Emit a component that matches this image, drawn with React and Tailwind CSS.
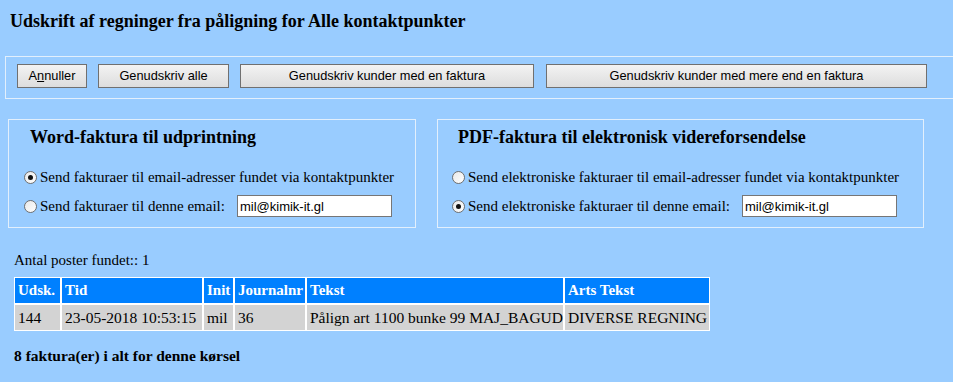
import React from "react";

const serif = { fontFamily: '"Liberation Serif", "Times New Roman", serif' };

const Button = ({ width, children }) => (
  <button
    type="button"
    className={`h-[24px] ${width} border border-[#707070] bg-gradient-to-b from-[#f3f3f3] to-[#dddddd] text-[12.8px] leading-none text-black`}
    style={{ fontFamily: '"Liberation Sans", Arial, sans-serif' }}
  >
    {children}
  </button>
);

const Radio = ({ checked }) => (
  <span className="flex h-[13px] w-[13px] shrink-0 items-center justify-center rounded-full border border-[#6f6f6f] bg-gradient-to-br from-[#e8e8e8] to-white">
    {checked && <span className="h-[5px] w-[5px] rounded-full bg-[#111]" />}
  </span>
);

const Option = ({ checked, label, email }) => (
  <div className="flex h-[24px] items-center">
    <Radio checked={checked} />
    <span className="ml-[3px] text-[15px] leading-[18px] whitespace-nowrap">{label}</span>
    {email && (
      <input
        readOnly
        value={email}
        className="ml-[12px] h-[22px] w-[155px] border border-[#767676] bg-white px-[2px] text-[13px] text-black outline-none"
        style={{ fontFamily: '"Liberation Sans", Arial, sans-serif' }}
      />
    )}
  </div>
);

const Box = ({ width, title, headPad, optPad, options }) => (
  <div className={`${width} h-[109px] border border-[#e2effc] pt-[6px]`}>
    <h3 className={`${headPad} text-[18px] font-bold leading-[22px]`}>{title}</h3>
    <div className={`${optPad} mt-[17px] flex flex-col gap-[5px]`}>
      {options.map((o, i) => (
        <Option key={i} {...o} />
      ))}
    </div>
  </div>
);

const columns = [
  { name: "Udsk.", w: "w-[47px]" },
  { name: "Tid", w: "w-[142px]" },
  { name: "Init", w: "w-[31px]" },
  { name: "Journalnr", w: "w-[72px]" },
  { name: "Tekst", w: "w-[258px]" },
  { name: "Arts Tekst", w: "w-[146px]" },
];

const rows = [["144", "23-05-2018 10:53:15", "mil", "36", "Pålign art 1100 bunke 99 MAJ_BAGUD", "DIVERSE REGNING"]];

export default function App() {
  return (
    <div className="h-[382px] w-[953px] overflow-hidden bg-[#99ccff] pt-[10px] text-black" style={serif}>
      <h2 className="pl-[10px] text-[18px] font-bold leading-[22px]">
        Udskrift af regninger fra påligning for Alle kontaktpunkter
      </h2>

      <div className="ml-[5px] mt-[24px] flex w-[960px] gap-[11px] border border-[#e2effc] pl-[11px] pt-[7px] pb-[10px]">
        <Button width="w-[70px]">
          A<span className="underline">n</span>nuller
        </Button>
        <Button width="w-[131px]">Genudskriv alle</Button>
        <Button width="w-[294px]">Genudskriv kunder med en faktura</Button>
        <Button width="w-[381px] ml-[1px]">Genudskriv kunder med mere end en faktura</Button>
      </div>

      <div className="ml-[8px] mt-[20px] flex gap-[21px]">
        <Box
          width="w-[408px]"
          title="Word-faktura til udprintning"
          headPad="pl-[21px]"
          optPad="pl-[15px]"
          options={[
            { checked: true, label: "Send fakturaer til email-adresser fundet via kontaktpunkter" },
            { checked: false, label: "Send fakturaer til denne email:", email: "mil@kimik-it.gl" },
          ]}
        />
        <Box
          width="w-[487px]"
          title="PDF-faktura til elektronisk videreforsendelse"
          headPad="pl-[20px]"
          optPad="pl-[14px]"
          options={[
            { checked: false, label: "Send elektroniske fakturaer til email-adresser fundet via kontaktpunkter" },
            { checked: true, label: "Send elektroniske fakturaer til denne email:", email: "mil@kimik-it.gl" },
          ]}
        />
      </div>

      <p className="ml-[14px] mt-[23px] text-[15px] leading-[18px]">Antal poster fundet:: 1</p>

      <table className="ml-[14px] mt-[8px] w-[696px] table-fixed border-separate border-spacing-0 text-[15.5px] leading-[25px]">
        <thead>
          <tr className="bg-[#0080ff] text-white">
            {columns.map((c) => (
              <th key={c.name} className={`${c.w} border border-white px-[3px] py-0 text-left text-[15px] font-bold whitespace-nowrap`}>
                {c.name}
              </th>
            ))}
          </tr>
        </thead>
        <tbody>
          {rows.map((r, i) => (
            <tr key={i} className="bg-[#d3d3d3]">
              {r.map((v, j) => (
                <td key={j} className="overflow-hidden border border-white px-[3px] py-0 whitespace-nowrap">
                  {v}
                </td>
              ))}
            </tr>
          ))}
        </tbody>
      </table>

      <p className="ml-[14px] mt-[16px] text-[15.5px] font-bold leading-[18px]">8 faktura(er) i alt for denne kørsel</p>
    </div>
  );
}
